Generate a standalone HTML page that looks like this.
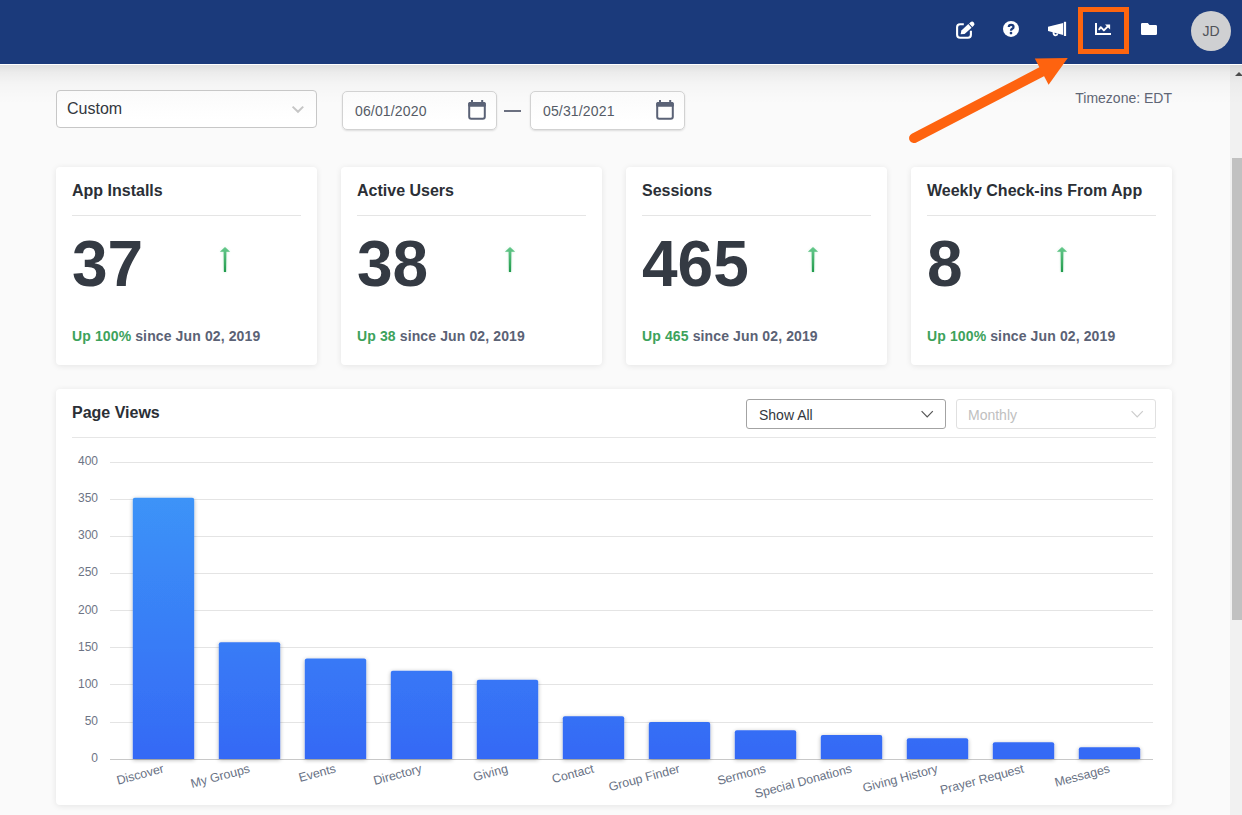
<!DOCTYPE html>
<html><head><meta charset="utf-8">
<style>
*{box-sizing:border-box;margin:0;padding:0}
html,body{width:1242px;height:815px;overflow:hidden}
body{font-family:"Liberation Sans",sans-serif;background:#fafafa;position:relative}
.abs{position:absolute}
#hdr{position:absolute;left:0;top:0;width:1242px;height:65px;background:#1b3a7b;border-bottom:1px solid #fff}
#hshadow{position:absolute;left:0;top:65px;width:1242px;height:40px;background:linear-gradient(rgba(0,0,0,.11),rgba(0,0,0,.06) 18%,rgba(0,0,0,.025) 45%,rgba(0,0,0,.008) 75%,rgba(0,0,0,0))}
#sb{position:absolute;left:1230px;top:65px;width:12px;height:750px;background:#f1f1f1}
#thumb{position:absolute;left:1232px;top:158px;width:10px;height:462px;background:#c1c1c1}
#sbarr{position:absolute;left:1235px;top:72px;width:0;height:0;border-left:4px solid transparent;border-right:4px solid transparent;border-bottom:4px solid #505050}
.sel{position:absolute;background:#fff;border:1px solid #c7c7c7;border-radius:4px}
.card{position:absolute;background:#fff;border-radius:4px;box-shadow:0 1px 6px rgba(0,0,0,.09)}
.ctitle{position:absolute;left:16px;top:15px;font-size:16px;font-weight:bold;color:#2b2f36;white-space:nowrap}
.cdiv{position:absolute;left:16px;right:16px;top:48px;height:1px;background:#e5e5e5}
.cnum{position:absolute;left:16px;top:60px;font-size:64px;font-weight:bold;color:#343a43;line-height:74px}
.carr{position:absolute;top:79px}
.cfoot{position:absolute;left:16px;top:161px;font-size:14px;font-weight:bold;color:#5b6275;white-space:nowrap;letter-spacing:0.12px}
.cfoot b{color:#3da25b}
.ylab{position:absolute;font-size:12px;color:#666e7d;text-align:right;width:40px;left:58px}
.grid{position:absolute;left:110px;width:1043px;height:1px;background:#e3e3e3}
.xl{position:absolute;font-size:12px;color:#5f6878;white-space:nowrap;transform-origin:100% 0;transform:rotate(-15deg)}
</style></head><body>
<div id="hdr"></div>
<!-- HDR -->
<svg class="abs" style="left:0;top:0" width="1242" height="64" viewBox="0 0 1242 64">
<g fill="none" stroke="#fff" stroke-width="2.1">
<path d="M963.8 24.3 H960.1 Q957.1 24.3 957.1 27.3 V34.7 Q957.1 37.7 960.1 37.7 H967.9 Q970.9 37.7 970.9 34.7 V30.8"/>
</g>
<g fill="#fff">
<g transform="translate(960.6,34.3) rotate(-42)">
<path d="M0 0 L3.2 -2.4 H12.6 V2.4 H3.2 Z"/>
<path d="M13.6 -2.4 H15.4 A2.4 2.4 0 0 1 15.4 2.4 H13.6 Z"/>
</g>
<circle cx="1011" cy="28.9" r="8"/>
<path d="M1048 26.7 L1063.2 23 V35 L1048 31.1 Z"/>
<rect x="1063.9" y="21.8" width="2.2" height="14.2"/>
<path d="M1052.6 31.5 Q1052.4 36.3 1055.6 36.2 Q1058.2 36.1 1058.3 33.5 L1056.8 33.2 Q1056.5 34.6 1055.6 34.6 Q1054.3 34.6 1054.5 31.9 Z"/>
<path d="M1095 22.9 H1097 V33 H1111 V34.9 H1095 Z"/>
<path d="M1105 24.4 H1110.1 V29.5 Z"/>
<path d="M1141 24.2 Q1141 22.9 1142.3 22.9 H1147.8 L1149.5 24.9 H1155.7 Q1157 24.9 1157 26.2 V33.7 Q1157 35 1155.7 35 H1142.3 Q1141 35 1141 33.7 Z"/>
</g>
<path d="M1099.2 29.3 L1100.8 27.2 L1103.9 30.4 L1107.6 26.6" fill="none" stroke="#fff" stroke-width="1.9" stroke-linejoin="round" stroke-linecap="round"/>
<path d="M1008.8 27.1 Q1008.8 24.9 1011.1 24.9 Q1013.5 24.9 1013.5 26.9 Q1013.5 28.1 1012.2 28.8 Q1011 29.5 1011 30.7" fill="none" stroke="#1b3a7b" stroke-width="2.3" stroke-linecap="butt"/>
<circle cx="1011" cy="33.1" r="1.35" fill="#1b3a7b"/>
<rect x="1080.5" y="9.5" width="46" height="42" fill="none" stroke="#fd650f" stroke-width="5"/>
<circle cx="1211" cy="31" r="20" fill="#cfd0d2"/>
<text x="1211" y="36" font-family="Liberation Sans" font-size="14" fill="#505359" text-anchor="middle">JD</text>
</svg>
<!-- /HDR -->
<div id="sb"></div><div id="thumb"></div><div id="sbarr"></div>
<div id="hshadow"></div>

<!-- Filters -->
<div class="sel" style="left:56px;top:90px;width:261px;height:38px;background:linear-gradient(#fafafa,#fdfdfd 45%,#fff 80%)">
  <div class="abs" style="left:10px;top:9px;font-size:16px;color:#33373d">Custom</div>
</div>
<div class="sel" style="left:342px;top:91px;width:155px;height:39px;border-radius:5px;border-color:#d2d2d2;box-shadow:0 1px 2px rgba(0,0,0,.12);background:linear-gradient(#fafafa,#fdfdfd 45%,#fff 80%)">
  <div class="abs" style="left:12px;top:11px;font-size:14px;color:#555b66;letter-spacing:.15px">06/01/2020</div>
</div>
<div class="abs" style="left:504px;top:110px;width:17px;height:2px;background:#6b7080"></div>
<div class="sel" style="left:530px;top:91px;width:155px;height:39px;border-radius:5px;border-color:#d2d2d2;box-shadow:0 1px 2px rgba(0,0,0,.12);background:linear-gradient(#fafafa,#fdfdfd 45%,#fff 80%)">
  <div class="abs" style="left:12px;top:11px;font-size:14px;color:#555b66;letter-spacing:.15px">05/31/2021</div>
</div>
<div class="abs" style="left:1000px;top:90px;width:172px;text-align:right;font-size:14px;color:#5f6675">Timezone: EDT</div>

<!-- Cards -->
<div class="card" style="left:56px;top:167px;width:261px;height:198px">
  <div class="ctitle">App Installs</div><div class="cdiv"></div>
  <div class="cnum">37</div>
  <div class="cfoot"><b>Up 100%</b> since Jun 02, 2019</div>
</div>
<div class="card" style="left:341px;top:167px;width:261px;height:198px">
  <div class="ctitle">Active Users</div><div class="cdiv"></div>
  <div class="cnum">38</div>
  <div class="cfoot"><b>Up 38</b> since Jun 02, 2019</div>
</div>
<div class="card" style="left:626px;top:167px;width:261px;height:198px">
  <div class="ctitle">Sessions</div><div class="cdiv"></div>
  <div class="cnum">465</div>
  <div class="cfoot"><b>Up 465</b> since Jun 02, 2019</div>
</div>
<div class="card" style="left:911px;top:167px;width:261px;height:198px">
  <div class="ctitle">Weekly Check-ins From App</div><div class="cdiv"></div>
  <div class="cnum">8</div>
  <div class="cfoot"><b>Up 100%</b> since Jun 02, 2019</div>
</div>

<!-- Page views panel -->
<div class="card" style="left:56px;top:389px;width:1116px;height:416px"></div>
<div class="abs" style="left:72px;top:404px;font-size:16px;font-weight:bold;color:#2b2f36">Page Views</div>
<div class="sel" style="left:746px;top:399px;width:200px;height:30px;border-color:#a3a3a3;border-radius:3px">
  <div class="abs" style="left:12px;top:7px;font-size:14px;color:#33373d">Show All</div>
</div>
<div class="sel" style="left:956px;top:399px;width:200px;height:30px;border-color:#e0e0e0;border-radius:3px">
  <div class="abs" style="left:11px;top:7px;font-size:14px;color:#c0c0c0">Monthly</div>
</div>
<div class="abs" style="left:72px;top:437px;width:1084px;height:1px;background:#e6e6e6"></div>

<!-- ICONS -->
<svg class="abs" style="left:0;top:0" width="1242" height="440" viewBox="0 0 1242 440">
<defs><linearGradient id="ag" x1="0" y1="0" x2="0" y2="1"><stop offset="0" stop-color="#66c98c"/><stop offset="1" stop-color="#1f9a4b"/></linearGradient>
<filter id="glow" x="-100%" y="-30%" width="300%" height="160%"><feGaussianBlur in="SourceGraphic" stdDeviation="1"/><feComponentTransfer><feFuncA type="linear" slope="0.25"/></feComponentTransfer><feMerge><feMergeNode/><feMergeNode in="SourceGraphic"/></feMerge></filter></defs>
<path d="M292.6 106.6 L298 111.8 L303.2 106.6" fill="none" stroke="#c6c6c6" stroke-width="2"/>
<g fill="none" stroke="#5a6276" stroke-width="2">
<rect x="469.2" y="103" width="15.6" height="15.8" rx="2"/>
<rect x="657.2" y="103" width="15.6" height="15.8" rx="2"/>
</g>
<g fill="#5a6276">
<rect x="468.2" y="102" width="17.6" height="4.8" rx="1.5"/>
<rect x="471" y="100" width="2" height="3"/><rect x="481.2" y="100" width="2" height="3"/>
<rect x="656.2" y="102" width="17.6" height="4.8" rx="1.5"/>
<rect x="659" y="100" width="2" height="3"/><rect x="669.2" y="100" width="2" height="3"/>
</g>
<g filter="url(#glow)">
<path id="arr" d="M0 247 L5.1 251.8 H1.4 L1.1 272 H-1.1 L-1.4 251.8 H-5.1 Z" fill="url(#ag)" transform="translate(225,0)"/>
<path d="M0 247 L5.1 251.8 H1.4 L1.1 272 H-1.1 L-1.4 251.8 H-5.1 Z" fill="url(#ag)" transform="translate(510,0)"/>
<path d="M0 247 L5.1 251.8 H1.4 L1.1 272 H-1.1 L-1.4 251.8 H-5.1 Z" fill="url(#ag)" transform="translate(813,0)"/>
<path d="M0 247 L5.1 251.8 H1.4 L1.1 272 H-1.1 L-1.4 251.8 H-5.1 Z" fill="url(#ag)" transform="translate(1062,0)"/>
</g>
<path d="M921.6 411.2 L927.2 416.8 L932.8 411.2" fill="none" stroke="#555" stroke-width="1.2"/>
<path d="M1131.6 411.2 L1137.2 416.8 L1142.8 411.2" fill="none" stroke="#ccc" stroke-width="1.2"/>
</svg>
<!-- /ICONS -->
<!-- CHART -->
<svg class="abs" style="left:0;top:0" width="1242" height="815" viewBox="0 0 1242 815">
<defs><linearGradient id="bg" gradientUnits="userSpaceOnUse" x1="0" y1="462" x2="0" y2="759"><stop offset="0" stop-color="#3d99f8"/><stop offset="1" stop-color="#3569f5"/></linearGradient>
<filter id="sh" x="-20%" y="-20%" width="140%" height="140%"><feGaussianBlur in="SourceAlpha" stdDeviation="2.2"/><feOffset dy="0.5"/><feComponentTransfer><feFuncA type="linear" slope="0.3"/></feComponentTransfer><feMerge><feMergeNode/><feMergeNode in="SourceGraphic"/></feMerge></filter></defs>
<rect x="110" y="462" width="1043" height="1" fill="#e4e4e4"/>
<rect x="110" y="499" width="1043" height="1" fill="#e4e4e4"/>
<rect x="110" y="536" width="1043" height="1" fill="#e4e4e4"/>
<rect x="110" y="573" width="1043" height="1" fill="#e4e4e4"/>
<rect x="110" y="610" width="1043" height="1" fill="#e4e4e4"/>
<rect x="110" y="647" width="1043" height="1" fill="#e4e4e4"/>
<rect x="110" y="684" width="1043" height="1" fill="#e4e4e4"/>
<rect x="110" y="722" width="1043" height="1" fill="#e4e4e4"/>
<rect x="110" y="759" width="1043" height="1" fill="#c8c8c8"/>
<g font-family="Liberation Sans" font-size="12" fill="#6d7485" text-anchor="end">
<text x="98" y="465.0">400</text>
<text x="98" y="502.1">350</text>
<text x="98" y="539.3">300</text>
<text x="98" y="576.4">250</text>
<text x="98" y="613.5">200</text>
<text x="98" y="650.6">150</text>
<text x="98" y="687.7">100</text>
<text x="98" y="724.9">50</text>
<text x="98" y="762.0">0</text>
</g>
<g filter="url(#sh)">
<path d="M132.8 759 V499.8 Q132.8 497.8 134.8 497.8 H192.2 Q194.2 497.8 194.2 499.8 V759 Z" fill="url(#bg)"/>
<path d="M218.8 759 V644.3 Q218.8 642.3 220.8 642.3 H278.2 Q280.2 642.3 280.2 644.3 V759 Z" fill="url(#bg)"/>
<path d="M304.8 759 V660.6 Q304.8 658.6 306.8 658.6 H364.2 Q366.2 658.6 366.2 660.6 V759 Z" fill="url(#bg)"/>
<path d="M390.8 759 V672.7 Q390.8 670.7 392.8 670.7 H450.2 Q452.2 670.7 452.2 672.7 V759 Z" fill="url(#bg)"/>
<path d="M476.8 759 V681.7 Q476.8 679.7 478.8 679.7 H536.2 Q538.2 679.7 538.2 681.7 V759 Z" fill="url(#bg)"/>
<path d="M562.8 759 V718.2 Q562.8 716.2 564.8 716.2 H622.2 Q624.2 716.2 624.2 718.2 V759 Z" fill="url(#bg)"/>
<path d="M648.8 759 V724.0 Q648.8 722.0 650.8 722.0 H708.2 Q710.2 722.0 710.2 724.0 V759 Z" fill="url(#bg)"/>
<path d="M734.8 759 V732.2 Q734.8 730.2 736.8 730.2 H794.2 Q796.2 730.2 796.2 732.2 V759 Z" fill="url(#bg)"/>
<path d="M820.8 759 V737.0 Q820.8 735.0 822.8 735.0 H880.2 Q882.2 735.0 882.2 737.0 V759 Z" fill="url(#bg)"/>
<path d="M906.8 759 V740.3 Q906.8 738.3 908.8 738.3 H966.2 Q968.2 738.3 968.2 740.3 V759 Z" fill="url(#bg)"/>
<path d="M992.8 759 V744.2 Q992.8 742.2 994.8 742.2 H1052.2 Q1054.2 742.2 1054.2 744.2 V759 Z" fill="url(#bg)"/>
<path d="M1078.8 759 V749.3 Q1078.8 747.3 1080.8 747.3 H1138.2 Q1140.2 747.3 1140.2 749.3 V759 Z" fill="url(#bg)"/>
</g>
<g font-family="Liberation Sans" font-size="12.4" fill="#687184" text-anchor="end">
<text transform="translate(162.6,765) rotate(-15)" x="0" y="7.5">Discover</text>
<text transform="translate(248.6,765) rotate(-15)" x="0" y="7.5">My Groups</text>
<text transform="translate(334.6,765) rotate(-15)" x="0" y="7.5">Events</text>
<text transform="translate(420.6,765) rotate(-15)" x="0" y="7.5">Directory</text>
<text transform="translate(506.6,765) rotate(-15)" x="0" y="7.5">Giving</text>
<text transform="translate(592.6,765) rotate(-15)" x="0" y="7.5">Contact</text>
<text transform="translate(678.6,765) rotate(-15)" x="0" y="7.5">Group Finder</text>
<text transform="translate(764.6,765) rotate(-15)" x="0" y="7.5">Sermons</text>
<text transform="translate(850.6,765) rotate(-15)" x="0" y="7.5">Special Donations</text>
<text transform="translate(936.6,765) rotate(-15)" x="0" y="7.5">Giving History</text>
<text transform="translate(1022.6,765) rotate(-15)" x="0" y="7.5">Prayer Request</text>
<text transform="translate(1108.6,765) rotate(-15)" x="0" y="7.5">Messages</text>
</g></svg>
<!-- /CHART -->
<!-- ARROW -->
<svg class="abs" style="left:0;top:0" width="1242" height="160" viewBox="0 0 1242 160">
<line x1="914.1" y1="138.1" x2="1045" y2="70" stroke="#fe630f" stroke-width="10" stroke-linecap="round"/>
<path d="M1034.8 58.4 L1067.8 58 L1048.6 84.8 Z" fill="#fe630f"/>
</svg>
<!-- /ARROW -->
</body></html>
